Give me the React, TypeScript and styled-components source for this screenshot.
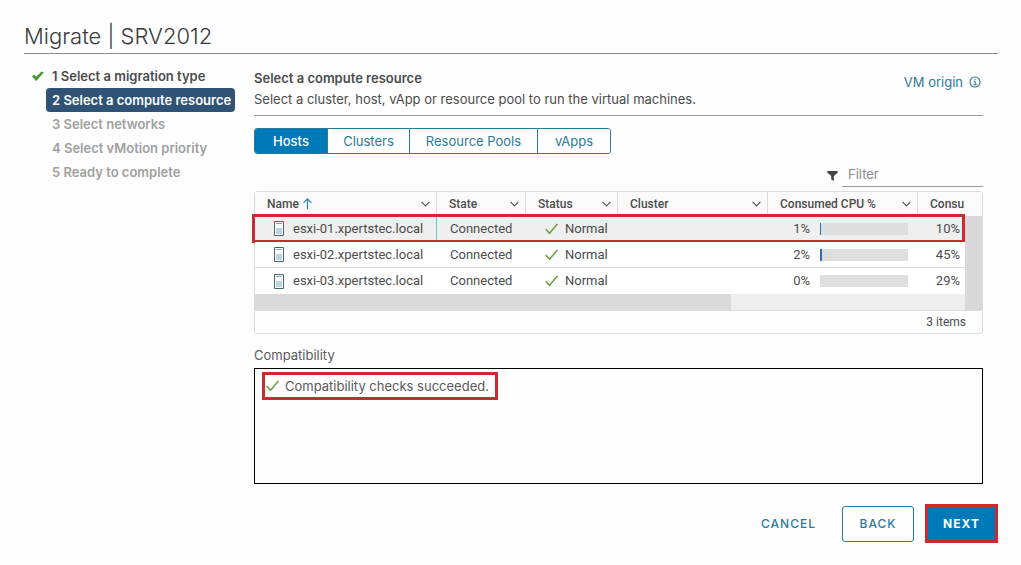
import React from "react";
import styled, { createGlobalStyle, css } from "styled-components";

const GlobalStyle = createGlobalStyle`
  *, *::before, *::after { box-sizing: border-box; }
  body {
    margin: 0;
    background: #fefefe;
    color: #4c4c4c;
    font: 13px/20px Inter, "Liberation Sans", sans-serif;
  }
  button, input { font: inherit; }
  h1, h2, p, ol { margin: 0; padding: 0; }
`;

const accent = "#2b7a99";
const alertRed = "#cb2a2f";

const Wizard = styled.div`
  padding: 22px 23px 22px 24px;
`;

const Title = styled.h1`
  padding-bottom: 3px;
  border-bottom: 1px solid #8c8c8c;
  color: #3a3a3a;
  font-size: 22px;
  line-height: 28px;
  font-weight: 300;
`;

const Body = styled.div`
  display: flex;
`;

const Steps = styled.ol`
  flex: 0 0 230px;
  padding-top: 10px;
  list-style: none;
`;

type StepState = "done" | "current" | "todo";

const StepItem = styled.li<{ $state: StepState }>`
  display: flex;
  align-items: center;
  height: 24px;
  margin-right: 19px;
  font-weight: 600;
  white-space: nowrap;
  color: ${(p) => (p.$state === "done" ? "#4c4c4c" : p.$state === "current" ? "#fff" : "#a0a0a0")};
`;

const StepMark = styled.span`
  display: flex;
  flex: 0 0 22px;
  padding-left: 8px;
`;

const StepLabel = styled.span<{ $current: boolean }>`
  flex: 1;
  padding-left: 6px;
  line-height: 24px;
  ${(p) =>
    p.$current &&
    css`
      border-radius: 4px;
      background: #2f5275;
    `}
`;

const Main = styled.main`
  flex: 1;
  min-width: 0;
  margin-right: 15px;
`;

const Intro = styled.header`
  display: flex;
  justify-content: space-between;
  padding: 14px 0 6px;
  border-bottom: 1px solid #9a9a9a;
`;

const Heading = styled.h2`
  font-size: 13px;
  line-height: 20px;
  font-weight: 600;
`;

const Lead = styled.p`
  padding-top: 1px;
`;

const OriginLink = styled.a`
  display: flex;
  align-items: center;
  gap: 6px;
  height: 28px;
  padding-right: 2px;
  color: ${accent};
  text-decoration: none;
`;

const Tabs = styled.div`
  display: inline-flex;
  margin-top: 12px;
  border: 1px solid ${accent};
  border-radius: 3px;
  overflow: hidden;
`;

const Tab = styled.button<{ $width: number }>`
  width: ${(p) => p.$width}px;
  height: 24px;
  padding: 0;
  border: 0;
  background: #fff;
  color: ${accent};
  & + & { border-left: 1px solid ${accent}; }
  &[aria-selected="true"] {
    background: #0079b8;
    color: #fff;
    font-weight: 500;
  }
`;

const FilterRow = styled.label`
  display: flex;
  justify-content: flex-end;
  align-items: flex-end;
  gap: 4px;
  margin-top: 7px;
`;

const FunnelBox = styled.span`
  display: flex;
  padding-bottom: 6px;
`;

const FilterInput = styled.input`
  width: 141px;
  height: 26px;
  padding: 0 6px;
  border: 0;
  border-bottom: 1px solid #9a9a9a;
  background: transparent;
  outline: none;
  &::placeholder { color: #8a8a8a; opacity: 1; }
`;

const Datagrid = styled.section`
  margin-top: 4px;
  border: 1px solid #dcdcdc;
  border-radius: 3px;
  font-family: Roboto, "Liberation Sans", sans-serif;
`;

const GridBody = styled.div`
  display: flex;
`;

const GridLeft = styled.div`
  flex: 1;
  min-width: 0;
`;

const Gutter = styled.div`
  flex: 0 0 17px;
  display: flex;
  flex-direction: column;
`;

const GutterHead = styled.div`
  height: 24px;
  background: #fafafa;
`;

const VerticalBar = styled.div`
  flex: 1;
  background: #d9d9d9;
`;

const HorizontalTrack = styled.div`
  height: 16px;
  background: #eeeeee;
`;

const HorizontalThumb = styled.div`
  width: 67%;
  height: 100%;
  background: #dadada;
`;

const Table = styled.table`
  width: 100%;
  table-layout: fixed;
  border-collapse: separate;
  border-spacing: 0;
`;

const HeadCell = styled.th`
  height: 24px;
  padding: 0 6px 0 12px;
  border-right: 1px solid #dcdcdc;
  background: #fafafa;
  font-size: 12px;
  line-height: 16px;
  font-weight: 500;
  text-align: left;
  white-space: nowrap;
  overflow: hidden;
  &:last-child { border-right: 0; padding-right: 0; }
`;

const HeadInner = styled.div`
  display: flex;
  align-items: center;
  justify-content: space-between;
`;

const HeadLabel = styled.span`
  display: flex;
  align-items: center;
  gap: 4px;
`;

const Cell = styled.td`
  height: 26px;
  padding: 0 5px 0 13px;
  border-bottom: 1px solid #dedede;
  white-space: nowrap;
  tr:last-child > & { border-bottom: 0; }
`;

const Row = styled.tr<{ $selected: boolean }>`
  position: relative;
  background: ${(p) => (p.$selected ? "#eeefee" : "#fff")};
  ${(p) =>
    p.$selected &&
    css`
      td:first-child { border-right: 1px solid #6fc0cc; }
      td:first-child::after {
        content: "";
        position: absolute;
        inset: -2px 0 -1px -3px;
        border: 3px solid ${alertRed};
        pointer-events: none;
      }
    `}
`;

const Inline = styled.span<{ $indent: number; $gap: number }>`
  display: flex;
  align-items: center;
  gap: ${(p) => p.$gap}px;
  padding-left: ${(p) => p.$indent}px;
`;

const Usage = styled.span`
  display: flex;
  align-items: center;
  justify-content: flex-end;
  gap: 10px;
  padding-right: 5px;
`;

const Meter = styled.span`
  width: 88px;
  height: 12px;
  background: #dedede;
`;

const MeterFill = styled.span`
  display: block;
  height: 100%;
  background: #2f6ea8;
`;

const RightText = styled.span`
  display: block;
  text-align: right;
`;

const GridFooter = styled.footer`
  padding-right: 16px;
  border-top: 1px solid #dcdcdc;
  font-size: 12px;
  line-height: 22px;
  text-align: right;
`;

const CompatTitle = styled.h2`
  margin-top: 11px;
  color: #5a5a5a;
  font-size: 13px;
  line-height: 20px;
  font-weight: 400;
`;

const CompatBox = styled.section`
  height: 116px;
  margin-top: 3px;
  padding: 3px 7px;
  border: 1px solid #000;
`;

const CompatResult = styled.p`
  display: inline-flex;
  align-items: center;
  gap: 6px;
  height: 28px;
  padding: 0 6px 0 1px;
  border: 3px solid ${alertRed};
  color: #5a5a5a;
`;

const Actions = styled.footer`
  display: flex;
  justify-content: flex-end;
  align-items: center;
  margin-top: 20px;
`;

const ActionButton = styled.button<{ $kind: "flat" | "outline" | "primary" }>`
  height: 36px;
  padding: 0;
  border: 0;
  background: transparent;
  color: ${accent};
  font-size: 12px;
  font-weight: 500;
  letter-spacing: 1px;
  ${(p) =>
    p.$kind === "flat" &&
    css`
      margin-right: 26px;
    `}
  ${(p) =>
    p.$kind === "outline" &&
    css`
      width: 72px;
      margin-right: 11px;
      border: 1px solid ${accent};
      border-radius: 3px;
    `}
  ${(p) =>
    p.$kind === "primary" &&
    css`
      width: 73px;
      height: 39px;
      border: 3px solid ${alertRed};
      background: #0079b8;
      color: #fff;
      font-weight: 700;
    `}
`;

const CheckIcon = () => (
  <svg width="13" height="12" viewBox="0 0 13 12" fill="none" stroke="#6f9f3e" strokeWidth="1.5" aria-hidden="true">
    <path d="M.7 6 4.5 10.3 12.4 1" />
  </svg>
);

const DoneIcon = () => (
  <svg width="12" height="10" viewBox="0 0 12 10" aria-hidden="true">
    <path d="M0 5.4 2 3.6 4.2 5.8 9.6.4 11.8 1.6 4.6 9.8 3.8 9.8Z" fill="#469c31" />
  </svg>
);

const Chevron = () => (
  <svg width="9" height="6" viewBox="0 0 9 6" fill="none" stroke="#555" strokeWidth="1.2" aria-hidden="true">
    <path d="M.6.8 4.5 4.8 8.4.8" />
  </svg>
);

const SortUp = () => (
  <svg width="9" height="12" viewBox="0 0 9 12" fill="none" stroke="#2b87a5" strokeWidth="1.2" aria-hidden="true">
    <path d="M4.5 11.5V1M.6 4.8 4.5.9 8.4 4.8" />
  </svg>
);

const HostIcon = () => (
  <svg width="10" height="15" viewBox="0 0 10 15" aria-hidden="true">
    <path d="M.5.5h9v14h-9z" fill="#fff" stroke="#466579" />
    <path d="M2 2.5h6" stroke="#8ba3b0" />
    <path d="M2 7h6v6H2z" fill="#bdd3da" />
  </svg>
);

const Funnel = () => (
  <svg width="11" height="10" viewBox="0 0 11 10" aria-hidden="true">
    <path d="M.3 0h10.4v1.4L6.9 5v5L4.2 8.6V5L.3 1.4Z" fill="#444" />
  </svg>
);

const InfoIcon = () => (
  <svg width="12" height="12" viewBox="0 0 12 12" fill="none" stroke={accent} aria-hidden="true">
    <circle cx="6" cy="6" r="5" strokeWidth="1.1" />
    <path d="M4.6 5.2H6.2V8.6M4.4 8.7h3.3M5.5 3.4h1.2" />
  </svg>
);

const steps: { label: string; state: StepState }[] = [
  { label: "1 Select a migration type", state: "done" },
  { label: "2 Select a compute resource", state: "current" },
  { label: "3 Select networks", state: "todo" },
  { label: "4 Select vMotion priority", state: "todo" },
  { label: "5 Ready to complete", state: "todo" },
];

const tabs = [
  { label: "Hosts", width: 72 },
  { label: "Clusters", width: 82 },
  { label: "Resource Pools", width: 128 },
  { label: "vApps", width: 73 },
];

const columns: { label: string; width?: number; sorted?: boolean; menu: boolean }[] = [
  { label: "Name", width: 182, sorted: true, menu: true },
  { label: "State", width: 89, menu: true },
  { label: "Status", width: 92, menu: true },
  { label: "Cluster", menu: true },
  { label: "Consumed CPU %", width: 150, menu: true },
  { label: "Consu", width: 47, menu: false },
];

const hosts = [
  { name: "esxi-01.xpertstec.local", cpu: 1, memory: 10 },
  { name: "esxi-02.xpertstec.local", cpu: 2, memory: 45 },
  { name: "esxi-03.xpertstec.local", cpu: 0, memory: 29 },
];

export default function App() {
  return (
    <>
      <GlobalStyle />
      <Wizard>
        <Title>Migrate | SRV2012</Title>
        <Body>
          <Steps>
            {steps.map((s) => (
              <StepItem key={s.label} $state={s.state}>
                <StepMark>{s.state === "done" && <DoneIcon />}</StepMark>
                <StepLabel $current={s.state === "current"}>{s.label}</StepLabel>
              </StepItem>
            ))}
          </Steps>
          <Main>
            <Intro>
              <div>
                <Heading>Select a compute resource</Heading>
                <Lead>Select a cluster, host, vApp or resource pool to run the virtual machines.</Lead>
              </div>
              <OriginLink href="#origin">
                VM origin <InfoIcon />
              </OriginLink>
            </Intro>
            <Tabs role="tablist">
              {tabs.map((t, i) => (
                <Tab key={t.label} role="tab" aria-selected={i === 0} $width={t.width}>
                  {t.label}
                </Tab>
              ))}
            </Tabs>
            <FilterRow>
              <FunnelBox>
                <Funnel />
              </FunnelBox>
              <FilterInput placeholder="Filter" aria-label="Filter" />
            </FilterRow>
            <Datagrid>
              <GridBody>
                <GridLeft>
                  <Table>
                    <colgroup>
                      {columns.map((c) => (
                        <col key={c.label} width={c.width} />
                      ))}
                    </colgroup>
                    <thead>
                      <tr>
                        {columns.map((c) => (
                          <HeadCell key={c.label} scope="col">
                            <HeadInner>
                              <HeadLabel>
                                {c.label}
                                {c.sorted && <SortUp />}
                              </HeadLabel>
                              {c.menu && <Chevron />}
                            </HeadInner>
                          </HeadCell>
                        ))}
                      </tr>
                    </thead>
                    <tbody>
                      {hosts.map((h, i) => (
                        <Row key={h.name} $selected={i === 0}>
                          <Cell>
                            <Inline $indent={6} $gap={9}>
                              <HostIcon />
                              {h.name}
                            </Inline>
                          </Cell>
                          <Cell>Connected</Cell>
                          <Cell>
                            <Inline $indent={6} $gap={7}>
                              <CheckIcon />
                              Normal
                            </Inline>
                          </Cell>
                          <Cell />
                          <Cell>
                            <Usage>
                              {h.cpu}%
                              <Meter>
                                <MeterFill style={{ width: `${h.cpu}%` }} />
                              </Meter>
                            </Usage>
                          </Cell>
                          <Cell>
                            <RightText>{h.memory}%</RightText>
                          </Cell>
                        </Row>
                      ))}
                    </tbody>
                  </Table>
                  <HorizontalTrack>
                    <HorizontalThumb />
                  </HorizontalTrack>
                </GridLeft>
                <Gutter>
                  <GutterHead />
                  <VerticalBar />
                </Gutter>
              </GridBody>
              <GridFooter>3 items</GridFooter>
            </Datagrid>
            <CompatTitle>Compatibility</CompatTitle>
            <CompatBox>
              <CompatResult>
                <CheckIcon />
                Compatibility checks succeeded.
              </CompatResult>
            </CompatBox>
          </Main>
        </Body>
        <Actions>
          <ActionButton $kind="flat">CANCEL</ActionButton>
          <ActionButton $kind="outline">BACK</ActionButton>
          <ActionButton $kind="primary">NEXT</ActionButton>
        </Actions>
      </Wizard>
    </>
  );
}
